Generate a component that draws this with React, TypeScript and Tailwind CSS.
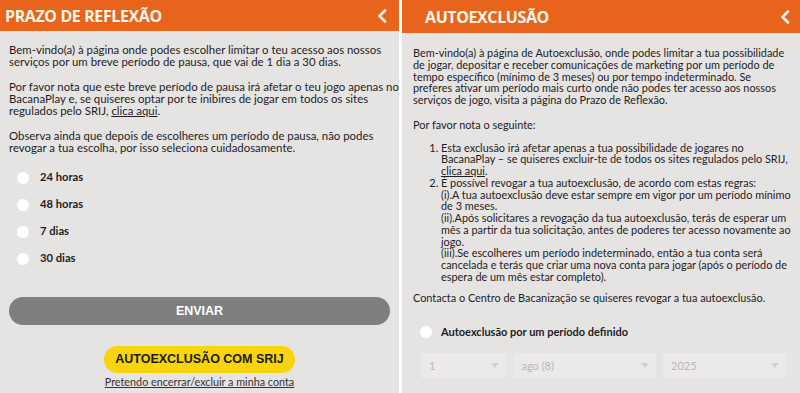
const body = "font-['Lato',_'Open_Sans',_sans-serif]";
const head = "font-['Open_Sans',_'Noto_Sans',_sans-serif]";

function Chevron() {
  return (
    <svg width="10" height="14" viewBox="0 0 10 14" fill="none">
      <path d="M8 1.5 L2.5 7 L8 12.5" stroke="#fff6ea" strokeWidth="2.6" strokeLinecap="round" strokeLinejoin="round" />
    </svg>
  );
}

function Header({ title, height, padLeft, padRight }: { title: string; height: string; padLeft: string; padRight: string }) {
  return (
    <div className={`flex shrink-0 items-center justify-between bg-[#e8641c] ${height} ${padLeft} ${padRight}`}>
      <h1 className={`${head} text-[16px] font-bold tracking-[-0.4px] text-[#fff6ea]`}>{title}</h1>
      <Chevron />
    </div>
  );
}

function Radio({ label }: { label: string }) {
  return (
    <div className="flex h-[27px] items-center">
      <span className="ml-[17px] h-[12px] w-[12px] rounded-full bg-white" />
      <span className={`${body} ml-[11px] text-[11.2px] font-bold text-[#1e1e1e]`}>{label}</span>
    </div>
  );
}

function Select({ value, width }: { value: string; width: string }) {
  return (
    <div className={`flex h-[25px] items-center justify-between bg-[#ebe9e9] pl-[8px] pr-[7px] ${width}`}>
      <span className={`${body} text-[11px] text-[#b9b7b7]`}>{value}</span>
      <svg width="8" height="5" viewBox="0 0 8 5">
        <path d="M0 0 L8 0 L4 5 Z" fill="#d2d0d0" />
      </svg>
    </div>
  );
}

export default function App() {
  return (
    <div className="flex h-[393px] w-[800px] gap-[3px] overflow-hidden bg-white">
      {/* Prazo de reflexão */}
      <div className="flex w-[399px] flex-col bg-[#e6e3e3]">
        <Header title="PRAZO DE REFLEXÃO" height="h-[31px]" padLeft="pl-[5px]" padRight="pr-[12px]" />
        <div className={`${body} whitespace-nowrap px-[9px] pt-[13px] text-[11.4px] leading-[12px] text-[#1e1e1e]`}>
          <p className="mb-[13px]">
            Bem-vindo(a) à página onde podes escolher limitar o teu acesso aos nossos<br />
            serviços por um breve período de pausa, que vai de 1 dia a 30 dias.
          </p>
          <p className="mb-[13px]">
            Por favor nota que este breve período de pausa irá afetar o teu jogo apenas no<br />
            BacanaPlay e, se quiseres optar por te inibires de jogar em todos os sites<br />
            regulados pelo SRIJ, <a href="#" className="underline">clica aqui</a>.
          </p>
          <p>
            Observa ainda que depois de escolheres um período de pausa, não podes<br />
            revogar a tua escolha, por isso seleciona cuidadosamente.
          </p>
        </div>
        <div className="mt-[10px] flex flex-col">
          <Radio label="24 horas" />
          <Radio label="48 horas" />
          <Radio label="7 dias" />
          <Radio label="30 dias" />
        </div>
        <button className="mx-[9px] mt-[25px] h-[28px] shrink-0 rounded-full bg-[#7f7f7f] font-['Liberation_Sans',_Arial,_sans-serif] text-[12.5px] font-bold text-white">
          ENVIAR
        </button>
        <div className="mt-[21px] flex flex-col items-center">
          <button className="h-[27px] w-[191px] shrink-0 rounded-full bg-[#f8d40c] font-['Liberation_Sans',_Arial,_sans-serif] text-[12.5px] font-bold text-[#1a1a1a]">
            AUTOEXCLUSÃO COM SRIJ
          </button>
          <a href="#" className={`${body} mt-[3px] text-[10.8px] leading-[12px] text-[#333] underline`}>
            Pretendo encerrar/excluir a minha conta
          </a>
        </div>
      </div>

      {/* Autoexclusão */}
      <div className="flex flex-1 flex-col bg-[#e6e3e3]">
        <Header title="AUTOEXCLUSÃO" height="h-[33px]" padLeft="pl-[23px]" padRight="pr-[10px]" />
        <div className={`${body} whitespace-nowrap pl-[11px] pr-[8px] pt-[14px] text-[10.9px] leading-[11.75px] text-[#1e1e1e]`}>
          <p className="mb-[13px]">
            Bem-vindo(a) à página de Autoexclusão, onde podes limitar a tua possibilidade<br />
            de jogar, depositar e receber comunicações de marketing por um período de<br />
            tempo específico (mínimo de 3 meses) ou por tempo indeterminado. Se<br />
            preferes ativar um período mais curto onde não podes ter acesso aos nossos<br />
            serviços de jogo, visita a página do Prazo de Reflexão.
          </p>
          <p className="mb-[11px]">Por favor nota o seguinte:</p>
          <ol className="mb-[9px] list-decimal pl-[28px]">
            <li>
              Esta exclusão irá afetar apenas a tua possibilidade de jogares no<br />
              BacanaPlay – se quiseres excluir-te de todos os sites regulados pelo SRIJ,<br />
              <a href="#" className="underline">clica aqui</a>.
            </li>
            <li>
              É possível revogar a tua autoexclusão, de acordo com estas regras:<br />
              (i).A tua autoexclusão deve estar sempre em vigor por um período mínimo<br />
              de 3 meses.<br />
              (ii).Após solicitares a revogação da tua autoexclusão, terás de esperar um<br />
              mês a partir da tua solicitação, antes de poderes ter acesso novamente ao<br />
              jogo.<br />
              (iii).Se escolheres um período indeterminado, então a tua conta será<br />
              cancelada e terás que criar uma nova conta para jogar (após o período de<br />
              espera de um mês estar completo).
            </li>
          </ol>
          <p>Contacta o Centro de Bacanização se quiseres revogar a tua autoexclusão.</p>
        </div>
        <div className="mt-[19px] flex h-[20px] shrink-0 items-center pl-[18px]">
          <span className="h-[12px] w-[12px] rounded-full bg-white" />
          <span className={`${body} ml-[9px] text-[11px] font-bold text-[#1e1e1e]`}>
            Autoexclusão por um período definido
          </span>
        </div>
        <div className="mt-[11px] flex shrink-0 gap-[7.5px] pl-[19px]">
          <Select value="1" width="w-[85px]" />
          <Select value="ago (8)" width="w-[142px]" />
          <Select value="2025" width="w-[123px]" />
        </div>
      </div>
    </div>
  );
}
